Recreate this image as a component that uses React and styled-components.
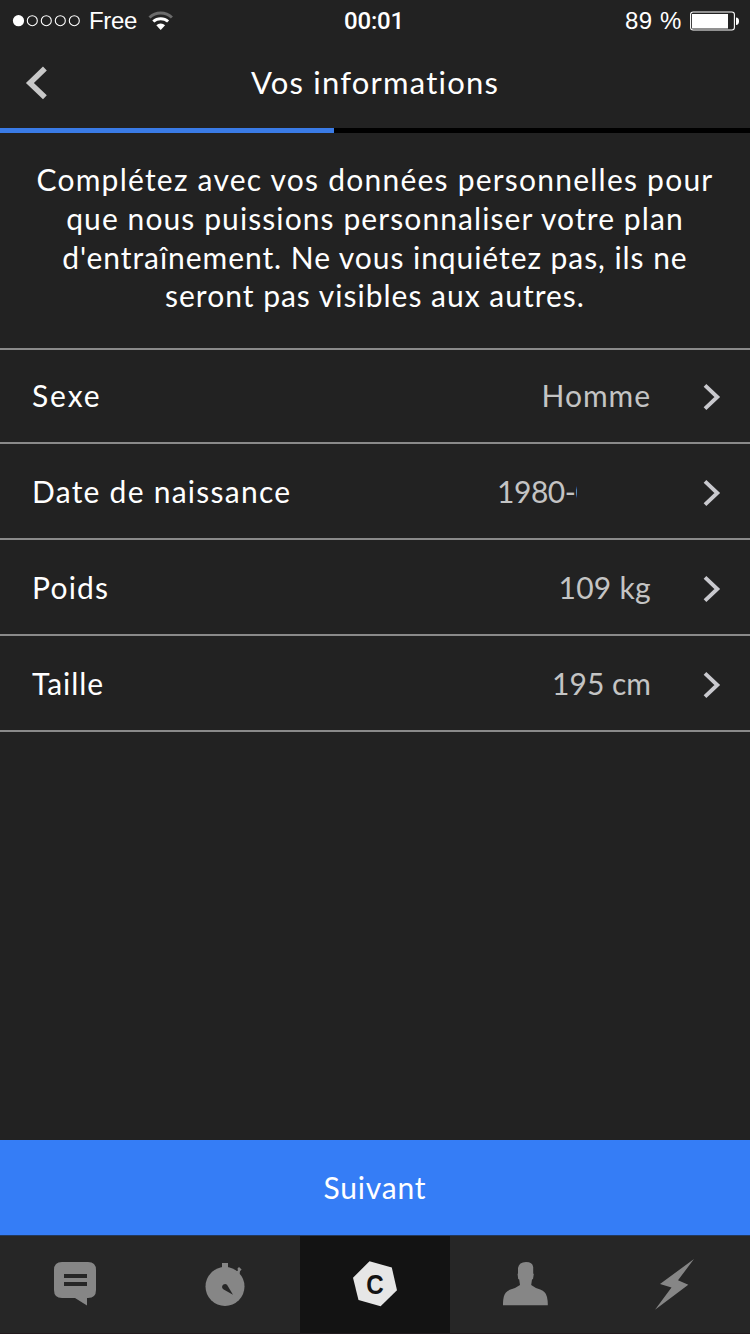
import React from 'react';
import styled, { createGlobalStyle } from 'styled-components';

const GlobalStyle = createGlobalStyle`
  * { box-sizing: border-box; }
  body { margin: 0; background: #222222; }
`;

const Screen = styled.div`
  width: 750px;
  height: 1334px;
  display: flex;
  flex-direction: column;
  overflow: hidden;
  background: #222222;
  color: #ffffff;
  font-family: Lato, 'Liberation Sans', sans-serif;
  font-size: 30px;
`;

const StatusBar = styled.header`
  height: 40px;
  flex: none;
  display: grid;
  grid-template-columns: 1fr auto 1fr;
  align-items: center;
  padding: 2px 11px 0 12px;
  font: 24px/36px 'Liberation Sans', Arial, sans-serif;
`;

const StatusSide = styled.div`
  display: flex;
  align-items: center;
  justify-content: ${(p) => (p.$end ? 'flex-end' : 'flex-start')};
  gap: ${(p) => (p.$end ? '8px' : '7px')};
`;

const Clock = styled.time`
  padding-right: 3px;
  font-family: Roboto, 'Liberation Sans', sans-serif;
  font-weight: 500;
  font-size: 24px;
  letter-spacing: ${(p) => p.$tracking}px;
`;

const Text = styled.span`
  white-space: pre;
  letter-spacing: ${(p) => p.$tracking || 0}px;
`;

const Icon = styled.svg`
  display: block;
  flex: none;
`;

const WifiIcon = styled(Icon)`
  margin-left: 4px;
`;

const NavBar = styled.nav`
  height: 88px;
  flex: none;
  display: grid;
  grid-template-columns: 80px 1fr 80px;
  align-items: center;
`;

const BackButton = styled.button`
  border: 0;
  padding: 0 0 2px 25px;
  background: none;
`;

const Title = styled.h1`
  margin: 0;
  padding-bottom: 4px;
  text-align: center;
  font-size: 31px;
  line-height: 40px;
  font-weight: 400;
  letter-spacing: ${(p) => p.$tracking}px;
`;

const Progress = styled.div`
  height: 5px;
  flex: none;
  background: #000000;
`;

const ProgressFill = styled.div`
  height: 5px;
  width: 334px;
  background: #3a7be6;
`;

const Intro = styled.p`
  height: 215px;
  flex: none;
  margin: 0;
  padding-top: 27.3px;
  display: flex;
  flex-direction: column;
  align-items: center;
  line-height: 38.7px;
`;

const List = styled.ul`
  list-style: none;
  margin: 0;
  padding: 0;
  flex: 1;
  border-top: 2px solid #8a8a8a;
`;

const Row = styled.li`
  height: ${(p) => (p.$first ? 94 : 96)}px;
  display: flex;
  align-items: center;
  padding: 0 29px ${(p) => (p.$first ? 2 : 0)}px 32px;
  border-bottom: 2px solid #8a8a8a;
`;

const Value = styled.span`
  margin-left: auto;
  width: ${(p) => (p.$clipped ? '154px' : 'auto')};
  color: #c4c4c4;
`;

const Clip = styled.span`
  display: block;
  width: 80px;
  overflow: hidden;
`;

const Chevron = styled(Icon)`
  margin: 3px 0 0 52px;
`;

const NextButton = styled.button`
  height: 95px;
  flex: none;
  border: 0;
  padding: 0 0 2px;
  background: #357df6;
  color: #ffffff;
  font: inherit;
`;

const TabBar = styled.footer`
  height: 99px;
  flex: none;
  display: grid;
  grid-template-columns: repeat(5, 1fr);
  border-top: 1px solid #23395c;
  border-bottom: 1px solid #211a1d;
  background: #262626;
`;

const Tab = styled.div`
  display: flex;
  justify-content: center;
  padding-top: 18px;
  background: ${(p) => (p.$active ? '#131313' : 'transparent')};
`;

const intro = [
  ['Complétez avec vos données personnelles pour', 1.23],
  ['que nous puissions personnaliser votre plan', 1.09],
  ["d'entraînement. Ne vous inquiétez pas, ils ne", 0.94],
  ['seront pas visibles aux autres.', 1],
];

const rows = [
  { label: 'Sexe', lt: 1.9, value: 'Homme', vt: 0.95, first: true },
  { label: 'Date de naissance', lt: 1.25, value: '1980-0', vt: -0.45, clipped: true },
  { label: 'Poids', lt: 1.2, value: '109 kg', vt: 0.3 },
  { label: 'Taille', lt: 0.95, value: '195 cm', vt: 0 },
];

export default function App() {
  return (
    <Screen>
      <GlobalStyle />
      <StatusBar>
        <StatusSide>
          <Icon width="70" height="14" viewBox="0 0 70 14">
            <circle cx="6.5" cy="6.7" r="5.6" fill="#fff" />
            {[20.3, 34.3, 48.3, 62.3].map((x) => (
              <circle key={x} cx={x} cy="6.7" r="5" fill="none" stroke="#fff" strokeWidth="1.1" />
            ))}
          </Icon>
          <Text $tracking={-0.3}>Free</Text>
          <WifiIcon width="26" height="20" viewBox="0 0 26 20">
            <path d="M1.500 6.500a16.400 16.400 0 0 1 22.400 0" fill="none" stroke="#6b6b6b" strokeWidth="3" />
            <path d="M5.300 10.500a11 11 0 0 1 14.800 0" fill="none" stroke="#fff" strokeWidth="3" />
            <path d="M8.300 14.200a6.300 6.300 0 0 1 8.800 0L12.700 19z" fill="#fff" />
          </WifiIcon>
        </StatusSide>
        <Clock $tracking={-0.2}>00:01</Clock>
        <StatusSide $end>
          <Text $tracking={0.6}>89 %</Text>
          <Icon width="49" height="20" viewBox="0 0 49 20">
            <rect x=".6" y="1" width="43.800" height="18" rx="2.500" fill="none" stroke="#fff" strokeWidth="1.100" />
            <rect x="2" y="3" width="36" height="14.500" fill="#fff" />
            <path d="M46 6.500q3 0 3 3.700t-3 3.700z" fill="#fff" />
          </Icon>
        </StatusSide>
      </StatusBar>
      <NavBar>
        <BackButton aria-label="Retour">
          <Icon width="24" height="34" viewBox="0 0 24 34">
            <path d="M19.900 2.500 4.900 17 19.900 31.200" fill="none" stroke="#c8c8c8" strokeWidth="5.500" />
          </Icon>
        </BackButton>
        <Title $tracking={1.2}>Vos informations</Title>
      </NavBar>
      <Progress><ProgressFill /></Progress>
      <Intro>
        {intro.map(([line, tracking]) => (
          <Text key={line} $tracking={tracking}>{line}</Text>
        ))}
      </Intro>
      <List>
        {rows.map((r) => (
          <Row key={r.label} $first={r.first}>
            <Text $tracking={r.lt}>{r.label}</Text>
            <Value $clipped={r.clipped}>
              {r.clipped
                ? <Clip><Text $tracking={r.vt}>{r.value}</Text></Clip>
                : <Text $tracking={r.vt}>{r.value}</Text>}
            </Value>
            <Chevron width="18" height="28" viewBox="0 0 18 28">
              <path d="M2 2.300 14.300 14 2 25.700" fill="none" stroke="#c9c9ce" strokeWidth="3.900" />
            </Chevron>
          </Row>
        ))}
      </List>
      <NextButton><Text $tracking={0.8}>Suivant</Text></NextButton>
      <TabBar>
        <Tab>
          <Icon width="54" height="60" viewBox="48 1254 54 60">
            <path fill="#868686" d="M62 1262h26q8 0 8 8v20q0 8-8 8h-1v7.500l-12-7.500H62q-8 0-8-8v-20q0-8 8-8z" />
            <path fill="#262626" d="M64 1274h23v4H64zM64 1282h23v4H64z" />
          </Icon>
        </Tab>
        <Tab>
          <Icon width="54" height="60" viewBox="198 1254 54 60">
            <circle cx="225" cy="1286.500" r="19.500" fill="#868686" />
            <path fill="#868686" d="M222 1263h6v6h-6zM235 1272l3-1.500-.5-2 1.500-1.500 2.600 2.600-1.600 1.600-.5 3z" />
            <path fill="#262626" d="M222.200 1288a3 3 0 0 1 4.800-3.200l6 10-8-4.500q-2-.8-2.800-2.300z" />
          </Icon>
        </Tab>
        <Tab $active>
          <Icon width="54" height="60" viewBox="348 1254 54 60">
            <path fill="#e6e6e6" d="M369.500 1261.300 391.800 1267.500 397 1290.300 380.600 1306.300 358.500 1300 353 1277.700z" />
            <text x="375" y="1294.400" textAnchor="middle" fontFamily="Liberation Sans, sans-serif" fontWeight="700" fontSize="27" textLength="17.500" lengthAdjust="spacingAndGlyphs" fill="#131313">C</text>
          </Icon>
        </Tab>
        <Tab>
          <Icon width="54" height="60" viewBox="498 1254 54 60">
            <path fill="#868686" d="M518 1268q1-6 8-6 6.500 0 7.200 5v6.500l.6.500-.8 5-1 .5-.8 5.500q3.800 3 9 4.500 5.800 2 6.800 7.500.9 4 .8 8.300h-44.800q-.2-4.500.8-8.500 1.200-5.500 6.700-7.300 5.500-1.500 9.500-4.500l-.8-5.500-1-.5-.6-5 .4-.5z" />
          </Icon>
        </Tab>
        <Tab>
          <Icon width="54" height="60" viewBox="648 1254 54 60">
            <path fill="#868686" d="M694 1259 678 1280.300 688.300 1284.800 655 1309.700 671.500 1287.600 660 1284z" />
          </Icon>
        </Tab>
      </TabBar>
    </Screen>
  );
}
